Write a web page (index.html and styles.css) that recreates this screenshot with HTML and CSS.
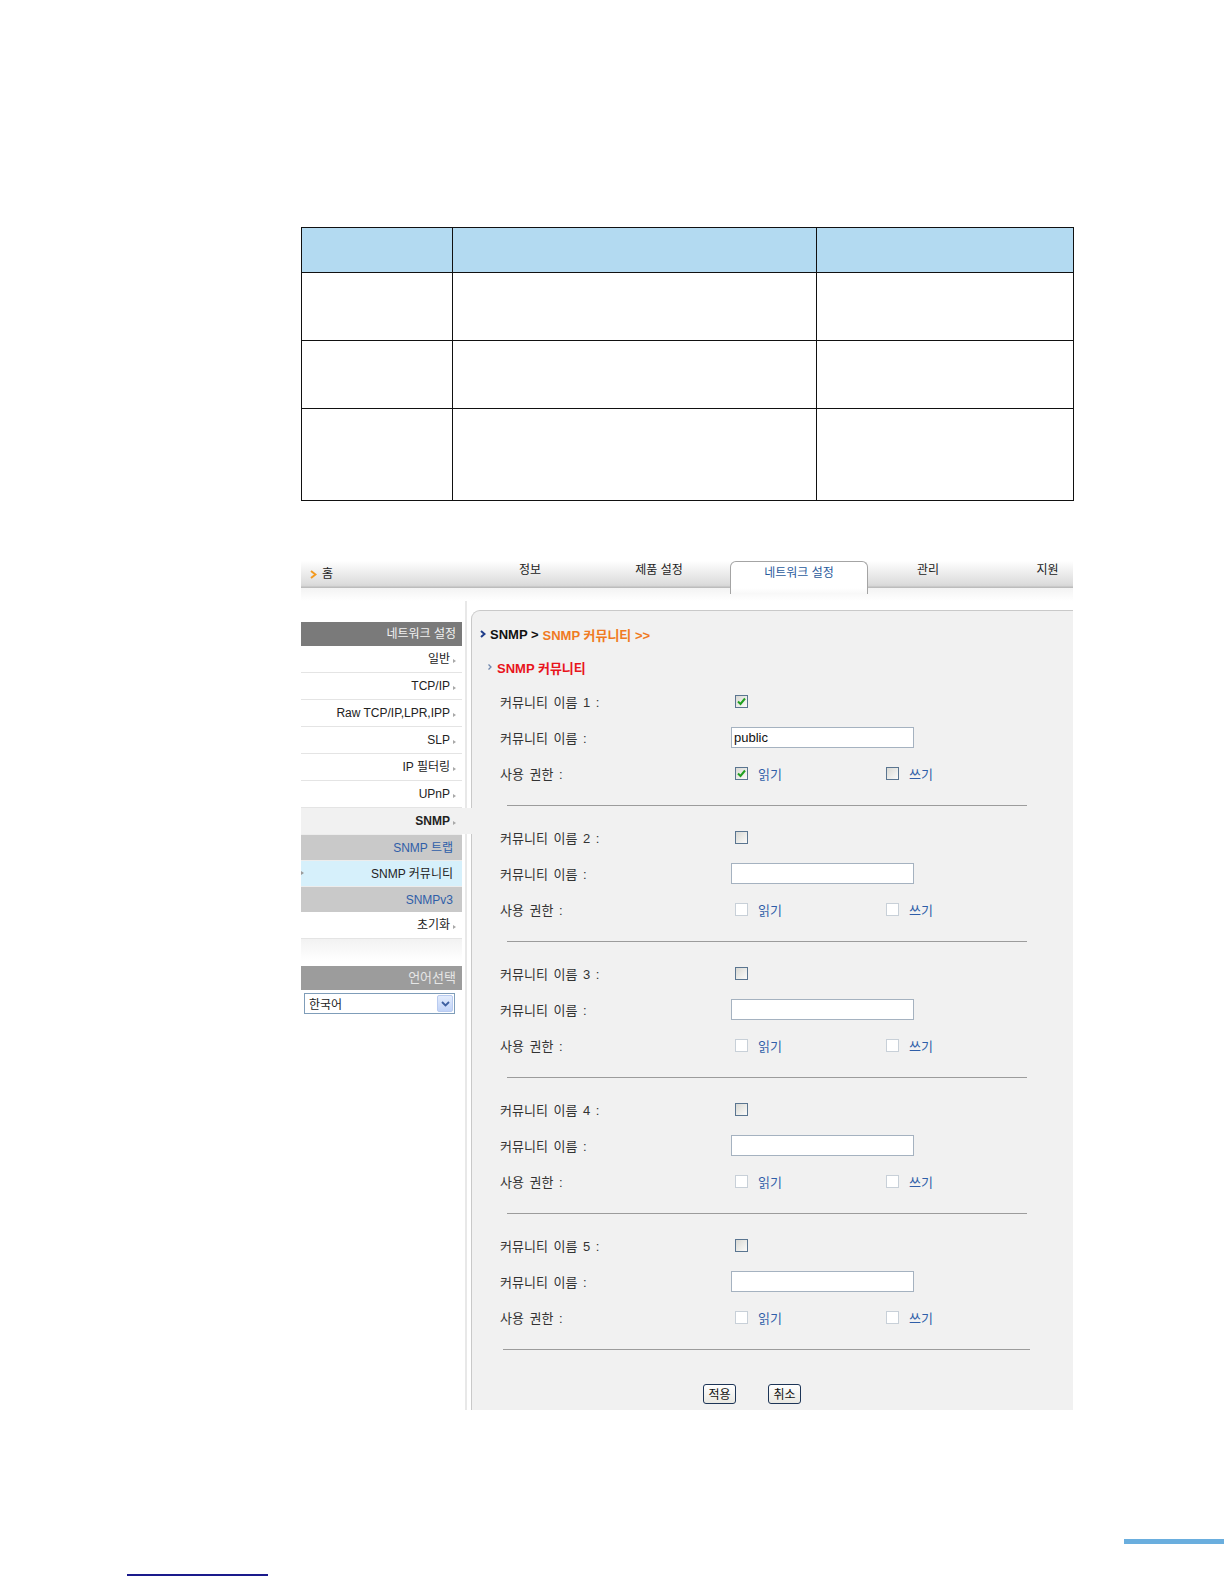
FILE: index.html
```html
<!DOCTYPE html>
<html lang="ko">
<head>
    <meta charset="UTF-8">
    <title>SNMP 커뮤니티</title>
    <link rel="stylesheet" href="styles.css">
</head>
<body>
<div class="page">
    <table class="spec">
        <tr class="head"><td class="c1"></td><td class="c2"></td><td class="c3"></td></tr>
        <tr class="r1"><td></td><td></td><td></td></tr>
        <tr class="r2"><td></td><td></td><td></td></tr>
        <tr class="r3"><td></td><td></td><td></td></tr>
    </table>

    <div class="shot">
        <div class="topnav">
            <div class="home">
                <svg width="7" height="9" viewBox="0 0 7 9"><path d="M1 1 L5.5 4.5 L1 8" fill="none" stroke="#f39a1e" stroke-width="2"/></svg>
                <span>홈</span>
            </div>
            <div class="nav-item w128">정보</div>
            <div class="nav-item w130">제품 설정</div>
            <div class="nav-gap"></div>
            <div class="nav-tab">네트워크 설정</div>
            <div class="nav-item w120">관리</div>
            <div class="nav-item last">지원</div>
        </div>

        <div class="content">
            <div class="sidebar">
                <div class="side-head">네트워크 설정</div>
                <div class="side-item arrow">일반</div>
                <div class="side-item arrow">TCP/IP</div>
                <div class="side-item arrow">Raw TCP/IP,LPR,IPP</div>
                <div class="side-item arrow">SLP</div>
                <div class="side-item arrow">IP 필터링</div>
                <div class="side-item arrow">UPnP</div>
                <div class="side-item arrow current">SNMP</div>
                <div class="side-sub">SNMP 트랩</div>
                <div class="side-sub active">SNMP 커뮤니티</div>
                <div class="side-sub">SNMPv3</div>
                <div class="side-item arrow">초기화</div>
                <div class="side-fade"></div>
                <div class="side-head lang">언어선택</div>
                <div class="select">
                    <span>한국어</span>
                    <span class="select-btn">
                        <svg width="9" height="6" viewBox="0 0 9 6"><path d="M1 1 L4.5 4.5 L8 1" fill="none" stroke="#3d5fa0" stroke-width="1.8"/></svg>
                    </span>
                </div>
            </div>

            <div class="panel">
                <div class="crumb">
                    <svg width="6" height="8" viewBox="0 0 6 8"><path d="M1 1 L4.5 4 L1 7" fill="none" stroke="#1f3d8a" stroke-width="2"/></svg>
                    <span class="crumb-root">SNMP &gt;</span>
                    <span class="crumb-cur">SNMP 커뮤니티 &gt;&gt;</span>
                </div>
                <div class="sec-title">
                    <svg width="4" height="6" viewBox="0 0 4 6"><path d="M0.5 0.5 L3 3 L0.5 5.5" fill="none" stroke="#6f86ad" stroke-width="1.3"/></svg>
                    <span>SNMP 커뮤니티</span>
                </div>

                <div class="form">
                    <div class="group">
                        <div class="row"><div class="label">커뮤니티 이름 1 :</div><span class="cb on"><svg width="11" height="11" viewBox="0 0 11 11"><path d="M2 5.5 L4.5 8 L9 2.5" fill="none" stroke="#21a121" stroke-width="2"/></svg></span></div>
                        <div class="row"><div class="label">커뮤니티 이름 :</div><input class="text" type="text" value="public"></div>
                        <div class="row"><div class="label">사용 권한 :</div>
                            <div class="perm"><span class="cb on"><svg width="11" height="11" viewBox="0 0 11 11"><path d="M2 5.5 L4.5 8 L9 2.5" fill="none" stroke="#21a121" stroke-width="2"/></svg></span><span class="perm-text">읽기</span></div>
                            <div class="perm"><span class="cb"></span><span class="perm-text">쓰기</span></div>
                        </div>
                        <div class="divider"></div>
                    </div>
                    <div class="group">
                        <div class="row"><div class="label">커뮤니티 이름 2 :</div><span class="cb"></span></div>
                        <div class="row"><div class="label">커뮤니티 이름 :</div><input class="text" type="text" value=""></div>
                        <div class="row"><div class="label">사용 권한 :</div>
                            <div class="perm"><span class="cb off"></span><span class="perm-text">읽기</span></div>
                            <div class="perm"><span class="cb off"></span><span class="perm-text">쓰기</span></div>
                        </div>
                        <div class="divider"></div>
                    </div>
                    <div class="group">
                        <div class="row"><div class="label">커뮤니티 이름 3 :</div><span class="cb"></span></div>
                        <div class="row"><div class="label">커뮤니티 이름 :</div><input class="text" type="text" value=""></div>
                        <div class="row"><div class="label">사용 권한 :</div>
                            <div class="perm"><span class="cb off"></span><span class="perm-text">읽기</span></div>
                            <div class="perm"><span class="cb off"></span><span class="perm-text">쓰기</span></div>
                        </div>
                        <div class="divider"></div>
                    </div>
                    <div class="group">
                        <div class="row"><div class="label">커뮤니티 이름 4 :</div><span class="cb"></span></div>
                        <div class="row"><div class="label">커뮤니티 이름 :</div><input class="text" type="text" value=""></div>
                        <div class="row"><div class="label">사용 권한 :</div>
                            <div class="perm"><span class="cb off"></span><span class="perm-text">읽기</span></div>
                            <div class="perm"><span class="cb off"></span><span class="perm-text">쓰기</span></div>
                        </div>
                        <div class="divider"></div>
                    </div>
                    <div class="group">
                        <div class="row"><div class="label">커뮤니티 이름 5 :</div><span class="cb"></span></div>
                        <div class="row"><div class="label">커뮤니티 이름 :</div><input class="text" type="text" value=""></div>
                        <div class="row"><div class="label">사용 권한 :</div>
                            <div class="perm"><span class="cb off"></span><span class="perm-text">읽기</span></div>
                            <div class="perm"><span class="cb off"></span><span class="perm-text">쓰기</span></div>
                        </div>
                        <div class="divider wide"></div>
                    </div>
                    <div class="actions">
                        <button class="btn">적용</button>
                        <button class="btn">취소</button>
                    </div>
                </div>
            </div>
        </div>
    </div>

    <div class="page-foot">
        <div class="foot-bar"></div>
        <div class="foot-line"></div>
    </div>
</div>
</body>
</html>
```

FILE: styles.css
```css
body {
    margin: 0;
    background: #fff;
    font-family: "Liberation Sans", "Noto Sans CJK KR", sans-serif;
    color: #222;
}
.page {
    width: 1224px;
    height: 1584px;
    overflow: hidden;
}
.spec {
    margin: 227px 0 0 301px;
    width: 772px;
    border-collapse: collapse;
    table-layout: fixed;
}
.spec td {
    border: 1px solid #111;
    padding: 0;
}
.spec .c1 { width: 150px; }
.spec .c2 { width: 363px; }
.spec .c3 { width: 256px; }
.spec .head td {
    background: #b3daf1;
    height: 44px;
}
.spec .r1 td, .spec .r2 td { height: 67px; }
.spec .r3 td { height: 91px; }

.shot {
    margin: 60px 0 0 301px;
    width: 772px;
}
.topnav {
    display: flex;
    height: 40px;
    font-size: 12px;
    line-height: 14px;
    background: linear-gradient(to bottom, #fff 0, #f3f3f3 8px, #dedede 22px, #d6d6d6 25px, #bcbcbc 26px, #bcbcbc 27px, #f3f3f3 27px, #fff 40px);
}
.home {
    width: 165px;
    box-sizing: border-box;
    padding: 6px 0 0 9px;
    display: flex;
    gap: 5px;
}
.home svg { margin-top: 3px; }
.nav-item {
    text-align: center;
    padding-top: 2px;
}
.w128 { width: 128px; }
.w130 { width: 130px; }
.w120 { width: 120px; }
.nav-item.last {
    width: 51px;
    padding-left: 34px;
}
.nav-gap { width: 6px; }
.nav-tab {
    width: 138px;
    height: 33px;
    box-sizing: border-box;
    border: 1px solid #a4a4a4;
    border-bottom: none;
    border-radius: 6px 6px 0 0;
    background: linear-gradient(to bottom, #fff 0, #fff 26px, #f6f6f6 33px);
    color: #2a5b9c;
    text-align: center;
    padding-top: 4px;
}

.content {
    display: flex;
}
.sidebar {
    width: 170px;
    flex-shrink: 0;
    padding-top: 21px;
    font-size: 12px;
    background: linear-gradient(to right, transparent 164px, #e8e8e8 164px, #e8e8e8 166px, transparent 166px);
}
.side-head {
    width: 161px;
    height: 24px;
    line-height: 24px;
    box-sizing: border-box;
    background: #7a7a7a;
    color: #f2f2f2;
    text-align: right;
    padding-right: 6px;
}
.side-head.lang {
    margin-top: 5px;
    background: #9c9c9c;
    color: #e6e6e6;
    font-size: 13px;
}
.side-item {
    width: 161px;
    height: 27px;
    line-height: 27px;
    box-sizing: border-box;
    border-bottom: 1px solid #e4e4e4;
    text-align: right;
    padding-right: 6px;
    background: #fff;
}
.arrow::after {
    content: "";
    display: inline-block;
    margin-left: 3px;
    border-left: 3px solid #a8a8a8;
    border-top: 2.5px solid transparent;
    border-bottom: 2.5px solid transparent;
    vertical-align: 0;
}
.side-item.current {
    width: 171px;
    height: 26px;
    line-height: 26px;
    border-bottom: none;
    background: #f1f1f1;
    font-weight: bold;
    padding-right: 16px;
    position: relative;
    z-index: 1;
}
.side-sub {
    width: 161px;
    height: 26px;
    line-height: 26px;
    box-sizing: border-box;
    background: #c9c9c9;
    color: #2f5ea8;
    text-align: right;
    padding-right: 9px;
    border-top: 1px solid #ececec;
}
.side-sub:first-of-type { height: 25px; }
.side-sub.active {
    background: #d6f0fb;
    color: #222;
    position: relative;
}
.side-sub.active::before {
    content: "";
    position: absolute;
    left: 0;
    top: 10px;
    border-left: 3px solid #9a9a9a;
    border-top: 2.5px solid transparent;
    border-bottom: 2.5px solid transparent;
}
.side-fade {
    width: 161px;
    height: 22px;
    background: linear-gradient(to bottom, #f2f2f2, #fff);
}
.select {
    margin: 3px 0 0 3px;
    width: 151px;
    height: 21px;
    box-sizing: border-box;
    border: 1px solid #7f9db9;
    background: #fff;
    display: flex;
    align-items: center;
    justify-content: space-between;
    padding-left: 4px;
    font-size: 12px;
}
.select-btn {
    width: 16px;
    height: 17px;
    margin-right: 1px;
    border: 1px solid #b9cbf0;
    border-radius: 2px;
    box-sizing: border-box;
    background: linear-gradient(to bottom, #e3ecfc, #c1d3f8);
    display: flex;
    align-items: center;
    justify-content: center;
}

.panel {
    flex: 1;
    margin-top: 9px;
    background: #f1f1f1;
    border-top: 1px solid #c9c9c9;
    border-left: 1px solid #c9c9c9;
    border-top-left-radius: 9px;
    padding-bottom: 6px;
}
.crumb {
    margin-top: 15px;
    padding-left: 8px;
    height: 16px;
    display: flex;
    align-items: center;
    gap: 4px;
    font-size: 13px;
    font-weight: bold;
}
.crumb-root { color: #111; }
.crumb-cur { color: #f07a22; }
.sec-title {
    margin-top: 17px;
    padding-left: 16px;
    height: 16px;
    display: flex;
    align-items: center;
    gap: 5px;
    font-size: 13px;
    font-weight: bold;
    color: #e8141c;
}
.form {
    margin-top: 8px;
    padding-left: 28px;
}
.row {
    height: 36px;
    display: flex;
    align-items: center;
}
.label {
    width: 231px;
    font-size: 13px;
    word-spacing: 2px;
    color: #333;
}
.cb {
    width: 13px;
    height: 13px;
    box-sizing: border-box;
    border: 1px solid #5a7590;
    background: linear-gradient(135deg, #d9d9d4, #fbfbfa);
    margin-left: 4px;
    display: inline-flex;
    align-items: center;
    justify-content: center;
}
.cb.off {
    border-color: #c8d0d8;
    background: #fff;
}
.text {
    width: 183px;
    height: 21px;
    box-sizing: border-box;
    border: 1px solid #a5b2c0;
    padding: 0 2px;
    margin: 0;
    font-family: "Liberation Sans", sans-serif;
    font-size: 13px;
    color: #111;
    background: #fff;
}
.perm {
    width: 151px;
    display: flex;
    align-items: center;
}
.perm-text {
    margin-left: 10px;
    font-size: 13px;
    color: #2f5ea8;
}
.divider {
    margin: 14px 0 13px 7px;
    width: 520px;
    border-top: 1px solid #9c9c9c;
}
.divider.wide {
    margin-left: 3px;
    width: 527px;
}
.actions {
    margin-top: 34px;
    padding-left: 203px;
    display: flex;
    gap: 32px;
}
.btn {
    width: 33px;
    height: 20px;
    padding: 0;
    border: 1px solid #1d3557;
    border-radius: 3px;
    background: linear-gradient(to bottom, #fff, #e9e8e2);
    font-family: "Noto Sans CJK KR", sans-serif;
    font-size: 12px;
    line-height: 18px;
    color: #111;
}

.page-foot {
    margin-top: 129px;
}
.foot-bar {
    margin-left: 1124px;
    width: 100px;
    height: 5px;
    background: #6aaede;
}
.foot-line {
    margin: 30px 0 0 127px;
    width: 141px;
    height: 2px;
    background: #1a1a8c;
}
```
